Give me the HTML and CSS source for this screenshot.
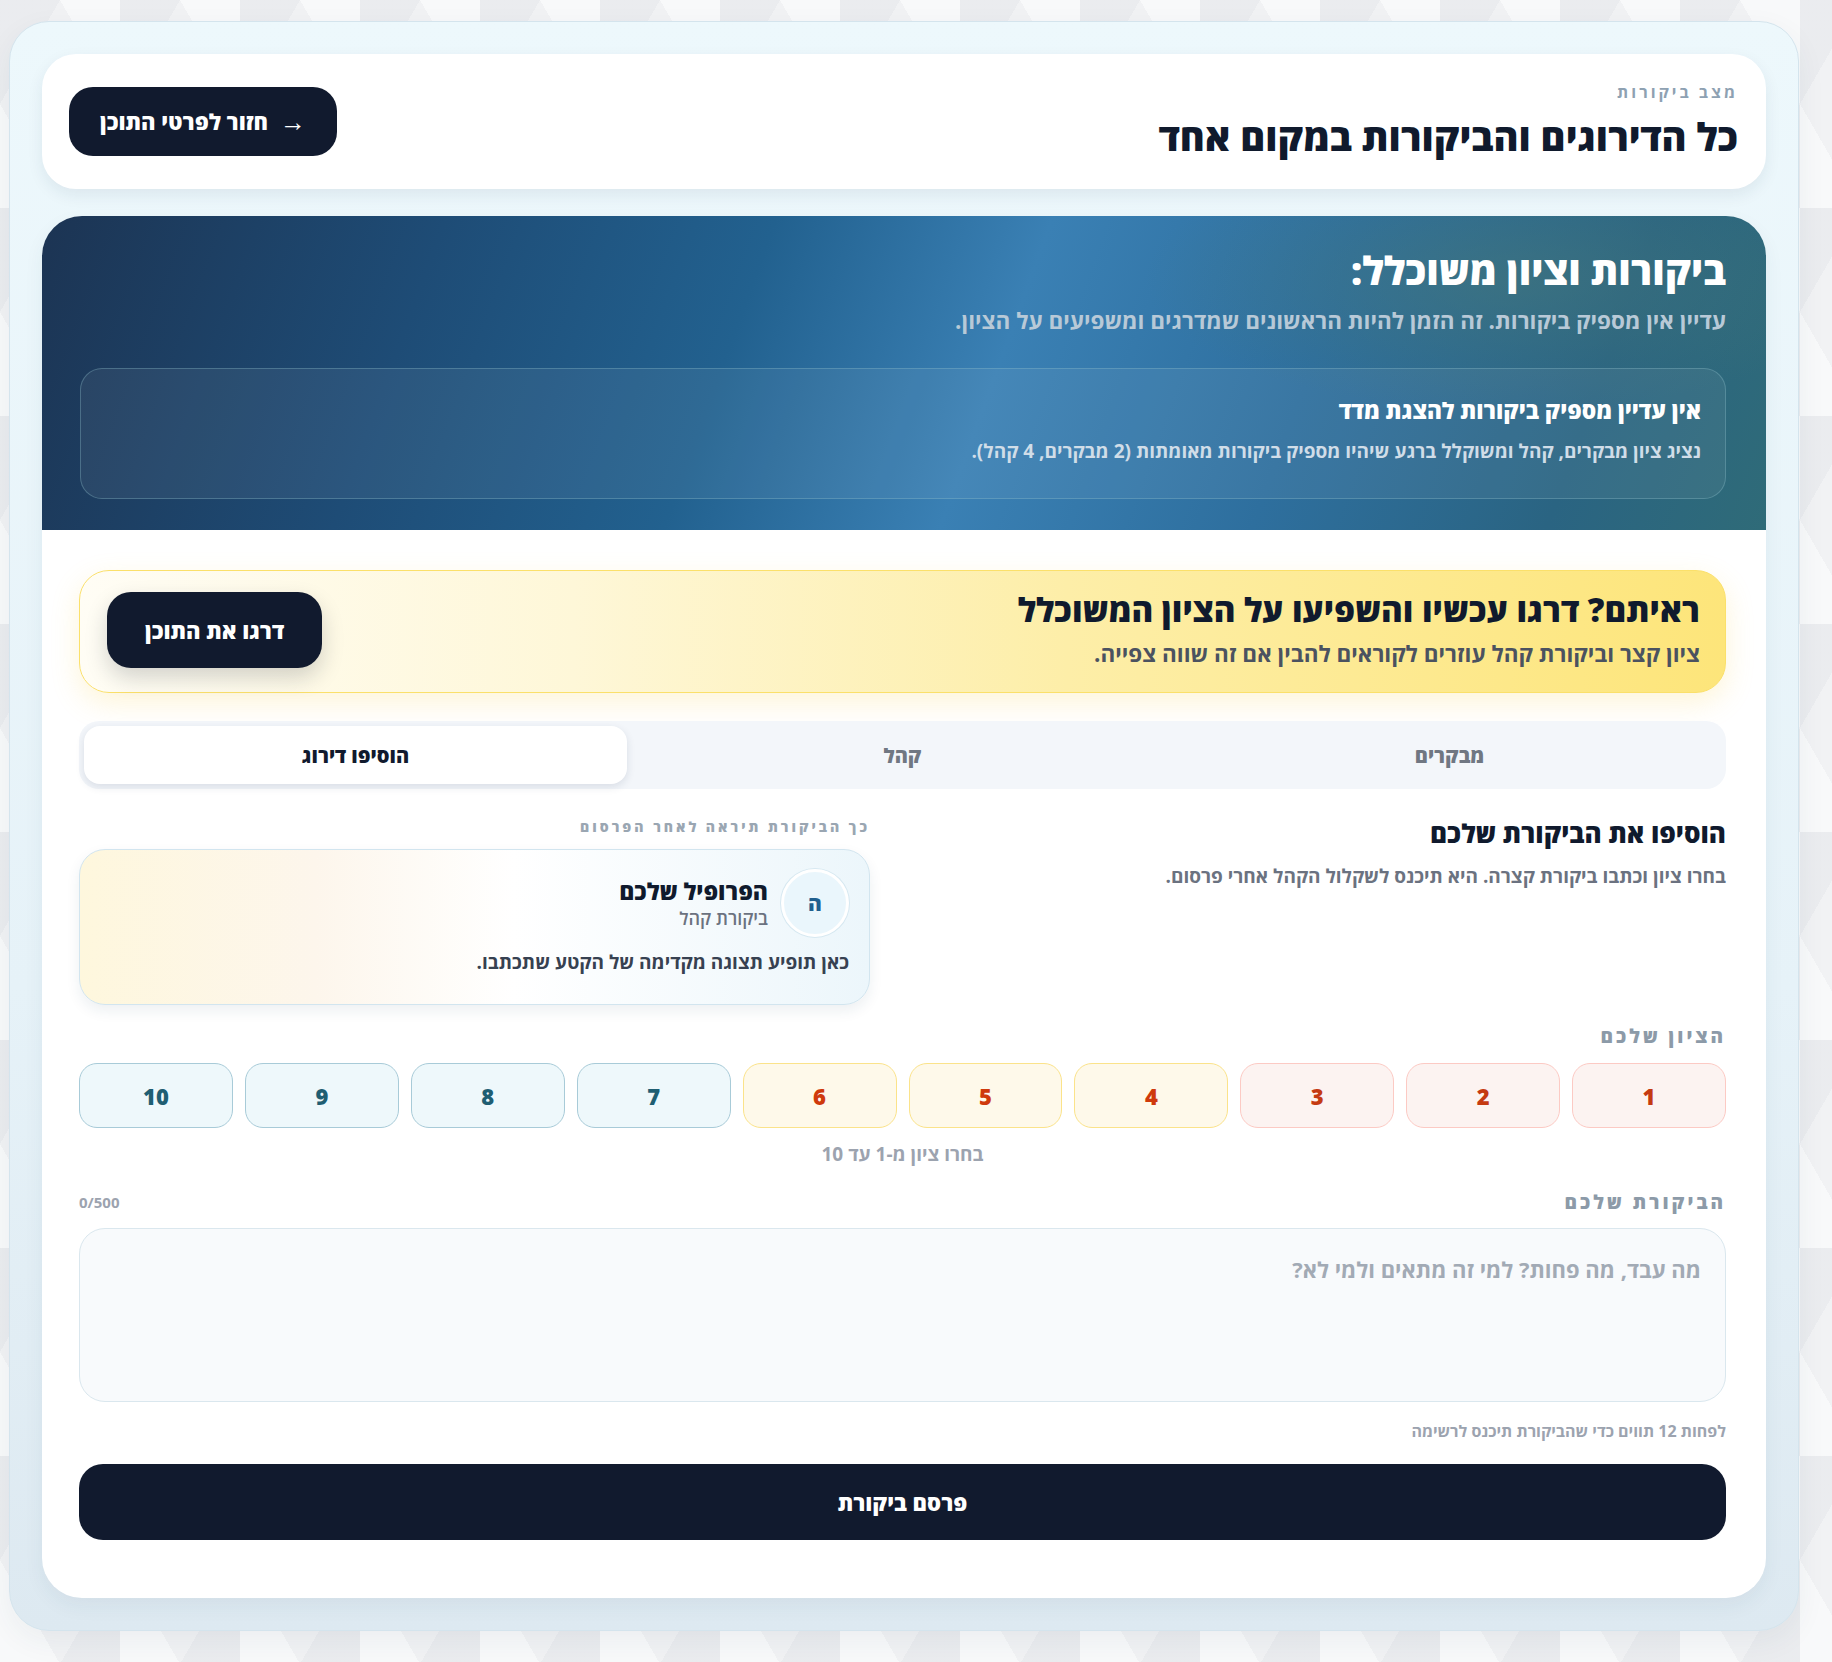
FILE: index.html
```html
<!DOCTYPE html>
<html lang="he" dir="rtl">
<head>
    <meta charset="UTF-8">
    <meta name="viewport" content="width=device-width, initial-scale=1.0">
    <title>ביקורות</title>
    <link rel="stylesheet" href="styles.css">
</head>
<body>
    <div class="shell">
        <header class="top-card">
            <div class="top-text">
                <div class="eyebrow">מצב ביקורות</div>
                <h1>כל הדירוגים והביקורות במקום אחד</h1>
            </div>
            <a class="back-btn" href="#"><span class="arrow">→</span>חזור לפרטי התוכן</a>
        </header>

        <main class="card">
            <section class="hero">
                <h2>ביקורות וציון משוכלל:</h2>
                <p class="hero-sub">עדיין אין מספיק ביקורות. זה הזמן להיות הראשונים שמדרגים ומשפיעים על הציון.</p>
                <div class="hero-box">
                    <h3>אין עדיין מספיק ביקורות להצגת מדד</h3>
                    <p>נציג ציון מבקרים, קהל ומשוקלל ברגע שיהיו מספיק ביקורות מאומתות (2 מבקרים, 4 קהל).</p>
                </div>
            </section>

            <div class="card-body">
                <div class="cta">
                    <div class="cta-text">
                        <h3>ראיתם? דרגו עכשיו והשפיעו על הציון המשוכלל</h3>
                        <p>ציון קצר וביקורת קהל עוזרים לקוראים להבין אם זה שווה צפייה.</p>
                    </div>
                    <button class="cta-btn">דרגו את התוכן</button>
                </div>

                <div class="tabs">
                    <button class="tab">מבקרים</button>
                    <button class="tab">קהל</button>
                    <button class="tab active">הוסיפו דירוג</button>
                </div>

                <div class="compose">
                    <div class="compose-intro">
                        <h3>הוסיפו את הביקורת שלכם</h3>
                        <p>בחרו ציון וכתבו ביקורת קצרה. היא תיכנס לשקלול הקהל אחרי פרסום.</p>
                    </div>
                    <div class="preview">
                        <div class="mini-label">כך הביקורת תיראה לאחר הפרסום</div>
                        <div class="preview-card">
                            <div class="preview-head">
                                <div class="avatar">ה</div>
                                <div>
                                    <div class="preview-name">הפרופיל שלכם</div>
                                    <div class="preview-role">ביקורת קהל</div>
                                </div>
                            </div>
                            <p class="preview-body">כאן תופיע תצוגה מקדימה של הקטע שתכתבו.</p>
                        </div>
                    </div>
                </div>

                <div class="field-label score-label">הציון שלכם</div>
                <div class="scores">
                    <button class="score low">1</button>
                    <button class="score low">2</button>
                    <button class="score low">3</button>
                    <button class="score mid">4</button>
                    <button class="score mid">5</button>
                    <button class="score mid">6</button>
                    <button class="score high">7</button>
                    <button class="score high">8</button>
                    <button class="score high">9</button>
                    <button class="score high">10</button>
                </div>
                <p class="score-hint">בחרו ציון מ-1 עד 10</p>

                <div class="review-head">
                    <div class="field-label">הביקורת שלכם</div>
                    <span class="counter" dir="ltr">0/500</span>
                </div>
                <textarea class="review-input" placeholder="מה עבד, מה פחות? למי זה מתאים ולמי לא?"></textarea>
                <p class="review-hint">לפחות 12 תווים כדי שהביקורת תיכנס לרשימה</p>

                <button class="submit-btn">פרסם ביקורת</button>
            </div>
        </main>
    </div>
</body>
</html>
```

FILE: styles.css
```css
* {
    box-sizing: border-box;
}
body {
    margin: 0;
    font-family: "Open Sans", "Liberation Sans", "DejaVu Sans", sans-serif;
    color: #111a2e;
    background-color: #f1f2f4;
    background-image:
        linear-gradient(60deg, rgba(255,255,255,0.5) 25%, transparent 25%, transparent 75%, rgba(255,255,255,0.5) 75%),
        linear-gradient(120deg, rgba(228,229,233,0.5) 25%, transparent 25%, transparent 75%, rgba(228,229,233,0.5) 75%);
    background-size: 120px 208px;
}
h1, h2, h3, p {
    margin: 0;
}
button, textarea {
    font-family: inherit;
}
.shell {
    margin: 21px 33px 31px 9px;
    padding: 32px;
    border-radius: 40px;
    border: 1px solid #d4e4ed;
    background: linear-gradient(180deg, #edf8fc 0%, #e6f2f8 60%, #dde9f1 100%);
    box-shadow: 0 10px 30px rgba(30, 60, 90, 0.06);
}

/* header */
.top-card {
    display: flex;
    align-items: center;
    justify-content: space-between;
    padding: 27px 28px 28px 27px;
    background: #fff;
    border-radius: 34px;
    box-shadow: 0 6px 16px rgba(30, 50, 80, 0.08);
    margin-bottom: 27px;
}
.eyebrow {
    font-size: 16px;
    line-height: 22px;
    font-weight: 700;
    letter-spacing: 3px;
    color: #8ea1b2;
    margin-bottom: 8px;
}
.top-card h1 {
    font-size: 38px;
    line-height: 50px;
    font-weight: 800;
    color: #101a2d;
}
.back-btn {
    display: flex;
    align-items: center;
    gap: 12px;
    height: 69px;
    padding: 0 31px;
    border-radius: 24px;
    background: #111a2e;
    color: #fff;
    font-size: 22px;
    font-weight: 800;
    text-decoration: none;
}
.back-btn .arrow {
    font-size: 26px;
    font-weight: 700;
}

/* main card */
.card {
    background: #fff;
    border-radius: 40px;
    overflow: hidden;
    box-shadow: 0 8px 20px rgba(30, 60, 90, 0.06);
}
.hero {
    padding: 29px 40px 31px 38px;
    color: #fff;
    background:
        radial-gradient(ellipse 30% 60% at 85% 20%, rgba(70, 120, 120, 0.55), transparent 70%),
        linear-gradient(110deg, #1c3453 0%, #1e4c76 22%, #22618f 40%, #3a80b4 55%, #2e6f9e 72%, #2a6482 88%, #2f6b78 100%);
}
.hero h2 {
    font-size: 39px;
    line-height: 50px;
    font-weight: 800;
}
.hero-sub {
    margin-top: 12px;
    font-size: 22.5px;
    line-height: 28px;
    font-weight: 700;
    color: #b8c9d7;
}
.hero-box {
    margin-top: 33px;
    padding: 28px 24px 33px;
    border-radius: 22px;
    border: 1px solid rgba(140, 190, 200, 0.35);
    background: rgba(255, 255, 255, 0.06);
}
.hero-box h3 {
    font-size: 22.7px;
    line-height: 28px;
    font-weight: 800;
}
.hero-box p {
    margin-top: 12px;
    font-size: 19px;
    line-height: 28px;
    font-weight: 700;
    color: #d0dde8;
}
.card-body {
    padding: 40px 40px 58px 37px;
}

/* call to action */
.cta {
    display: flex;
    align-items: center;
    justify-content: space-between;
    padding: 20px 25px 23px 27px;
    border-radius: 30px;
    border: 1px solid #fbe06a;
    background: linear-gradient(270deg, #fde57a 0%, #fdeea8 40%, #fef7d8 70%, #fffdf5 100%);
    box-shadow: 0 10px 28px rgba(250, 210, 80, 0.22);
}
.cta h3 {
    font-size: 33px;
    line-height: 38px;
    font-weight: 800;
    color: #101a2d;
}
.cta p {
    margin-top: 10px;
    font-size: 22.5px;
    line-height: 30px;
    font-weight: 700;
    color: #4b5260;
}
.cta-btn {
    height: 76px;
    padding: 0 38px;
    border: none;
    border-radius: 24px;
    background: #111a2e;
    color: #fff;
    font-size: 22px;
    font-weight: 800;
    box-shadow: 0 10px 22px rgba(17, 26, 46, 0.18);
}

/* tabs */
.tabs {
    display: grid;
    grid-template-columns: repeat(3, 1fr);
    gap: 4px;
    margin-top: 28px;
    padding: 5px;
    border-radius: 20px;
    background: #f3f6fa;
}
.tab {
    height: 58px;
    border: none;
    border-radius: 16px;
    background: transparent;
    font-size: 20px;
    font-weight: 800;
    color: #707782;
}
.tab.active {
    background: #fff;
    color: #111a2e;
    box-shadow: 0 3px 8px rgba(30, 50, 80, 0.12);
}

/* compose */
.compose {
    display: grid;
    grid-template-columns: 1fr 1fr;
    gap: 65px;
    margin-top: 28px;
}
.compose-intro h3 {
    font-size: 26px;
    line-height: 32px;
    font-weight: 800;
    color: #101a2d;
}
.compose-intro p {
    margin-top: 14px;
    font-size: 19px;
    line-height: 26px;
    font-weight: 700;
    color: #6b7280;
}
.mini-label {
    font-size: 14px;
    line-height: 20px;
    font-weight: 800;
    letter-spacing: 3px;
    color: #9aa6b2;
    margin-bottom: 12px;
}
.preview-card {
    padding: 19px 20px 29px;
    border-radius: 26px;
    border: 1px solid #d2e5ef;
    background: linear-gradient(270deg, #ecf6fb 0%, #ffffff 45%, #fdf6ec 70%, #fef7dd 100%);
    box-shadow: 0 6px 14px rgba(30, 60, 90, 0.08);
}
.preview-head {
    display: flex;
    align-items: center;
    gap: 13px;
}
.avatar {
    width: 68px;
    height: 68px;
    border-radius: 50%;
    border: 3px solid #fff;
    background: #eaf6fc;
    box-shadow: 0 0 0 1px #d6e8f1;
    color: #1f5f8f;
    font-size: 21px;
    font-weight: 800;
    display: flex;
    align-items: center;
    justify-content: center;
}
.preview-name {
    font-size: 23px;
    line-height: 29px;
    font-weight: 800;
    color: #101a2d;
}
.preview-role {
    font-size: 18px;
    line-height: 24px;
    font-weight: 600;
    color: #6b7280;
}
.preview-body {
    margin-top: 12px;
    font-size: 19px;
    line-height: 26px;
    font-weight: 700;
    color: #374151;
}

/* score */
.field-label {
    font-size: 19px;
    line-height: 20px;
    font-weight: 800;
    letter-spacing: 3px;
    color: #8c9aa8;
}
.score-label {
    margin-top: 21px;
}
.scores {
    display: grid;
    grid-template-columns: repeat(10, 1fr);
    gap: 12px;
    margin-top: 17px;
}
.score {
    height: 65px;
    border-radius: 18px;
    font-size: 22px;
    font-weight: 800;
    border: 1px solid;
}
.score.low {
    background: #fcf3f1;
    border-color: #fccac4;
    color: #c53a12;
}
.score.mid {
    background: #fef9ea;
    border-color: #fbe38a;
    color: #cf3a0c;
}
.score.high {
    background: #eef8fb;
    border-color: #a8cbd8;
    color: #1f5e72;
}
.score-hint {
    margin-top: 15px;
    text-align: center;
    font-size: 19px;
    line-height: 22px;
    font-weight: 700;
    color: #9ca3af;
}
.review-head {
    display: flex;
    justify-content: space-between;
    align-items: center;
    margin-top: 27px;
}
.counter {
    font-size: 15px;
    font-weight: 700;
    color: #9ca3af;
}
.review-input {
    display: block;
    width: 100%;
    height: 174px;
    margin-top: 16px;
    padding: 26px 24px;
    border-radius: 26px;
    border: 1px solid #dae7ee;
    background: #f8fafc;
    font-size: 22px;
    line-height: 28px;
    font-weight: 700;
    color: #111a2e;
    resize: none;
}
.review-input::placeholder {
    color: #a2aab5;
}
.review-hint {
    margin-top: 19px;
    font-size: 16px;
    line-height: 20px;
    font-weight: 700;
    color: #9ca3af;
}
.submit-btn {
    display: block;
    width: 100%;
    height: 76px;
    margin-top: 23px;
    border: none;
    border-radius: 24px;
    background: #111a2e;
    color: #fff;
    font-size: 22px;
    font-weight: 800;
}
```
